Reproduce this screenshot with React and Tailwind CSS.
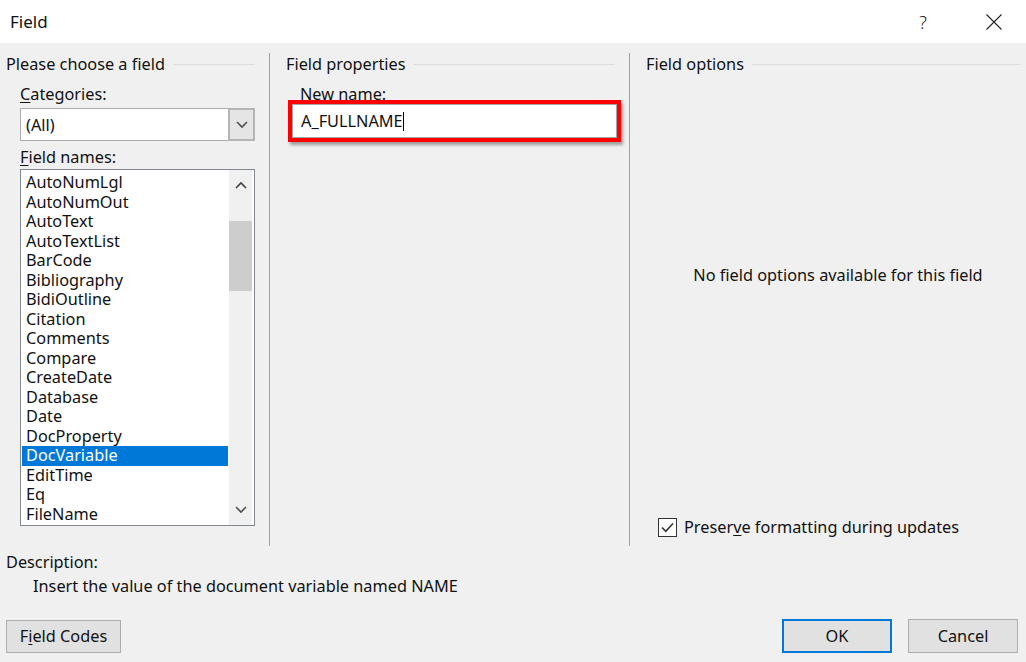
import React from "react";

const items = [
  "AutoNumLgl","AutoNumOut","AutoText","AutoTextList","BarCode","Bibliography","BidiOutline","Citation","Comments","Compare","CreateDate","Database","Date","DocProperty","DocVariable","EditTime","Eq","FileName",
];

function Heading({ children }) {
  return (
    <div className="flex items-center h-[22px] gap-[8px]">
      <span className="whitespace-nowrap">{children}</span>
      <div className="flex-1 h-px bg-[#dcdcdc]" />
    </div>
  );
}

function Chevron({ up }) {
  return (
    <svg width="12" height="8" viewBox="0 0 12 8">
      <path d={up ? "M1 7 L6 2 L11 7" : "M1 1 L6 6 L11 1"} fill="none" stroke={up ? "#404040" : "#505050"} strokeWidth="1.6" />
    </svg>
  );
}

export default function App() {
  return (
    <div className="w-[1026px] h-[662px] bg-[#f0f0f0] flex flex-col overflow-hidden text-[16.3px] text-[#111] font-['Segoe_UI','Noto_Sans',sans-serif] leading-[20px]">
      {/* Title bar */}
      <div className="h-[43px] bg-white flex items-center shrink-0">
        <span className="ml-[10px] text-[17px]">Field</span>
        <div className="flex-1" />
        <span className="text-[18px] mr-[59px] text-[#222] font-light">?</span>
        <svg width="16" height="16" viewBox="0 0 16 16" className="mr-[24px]">
          <path d="M0.5 0.5 L15.5 15.5 M15.5 0.5 L0.5 15.5" stroke="#222" strokeWidth="1.1" />
        </svg>
      </div>

      {/* Main */}
      <div className="flex h-[503px] pt-[10px] shrink-0">
        {/* Left column */}
        <div className="w-[269px] pl-[6px] pr-[14px] flex flex-col">
          <Heading>Please choose a field</Heading>
          <div className="mt-[9px] ml-[14px]"><span className="underline underline-offset-2">C</span>ategories:</div>
          <div className="mt-[4px] ml-[14px] h-[33px] bg-white border border-[#adadad] flex items-stretch">
            <div className="flex-1 flex items-center pl-[5px]">(All)</div>
            <div className="w-[27px] my-[-1px] mr-[-1px] bg-[#e5e5e5] border-2 border-[#b4b4b4] flex items-center justify-center">
              <Chevron />
            </div>
          </div>
          <div className="mt-[6px] ml-[14px]"><span className="underline underline-offset-2">F</span>ield names:</div>
          <div className="mt-[2px] ml-[14px] h-[357px] bg-white border border-[#828790] flex">
            <div className="flex-1 pt-[3px] pl-[1px]">
              {items.map((it) => (
                <div
                  key={it}
                  className={
                    "h-[19.5px] leading-[19.5px] pl-[4px] whitespace-nowrap " +
                    (it === "DocVariable" ? "bg-[#0078d7] text-white" : "")
                  }
                >
                  {it}
                </div>
              ))}
            </div>
            <div className="w-[23px] ml-[1px] mr-[2px] bg-[#f0f0f0] flex flex-col items-center">
              <div className="h-[30px] flex items-center justify-center"><Chevron up /></div>
              <div className="mt-[21px] w-full h-[70px] bg-[#cdcdcd]" />
              <div className="flex-1" />
              <div className="h-[30px] flex items-center justify-center"><Chevron /></div>
            </div>
          </div>
        </div>

        <div className="w-px bg-[#a0a0a0]" />

        {/* Middle column */}
        <div className="w-[359px] pl-[16px] pr-[14px] flex flex-col">
          <Heading>Field properties</Heading>
          <div className="mt-[9px] ml-[14px]">New name:</div>
          <div className="mt-[-4px] ml-[2px] mr-[-6px] h-[42px] border-4 border-[#ff0000] shadow-[2px_3px_3px_rgba(0,0,0,0.35)] bg-[#f0f0f0] flex">
            <div className="flex-1 bg-white border border-[#a5a5a5] flex items-center pl-[8px]">
              <span>A_FULLNAME</span>
              <span className="w-px h-[19px] bg-black" />
            </div>
          </div>
        </div>

        <div className="w-px bg-[#a0a0a0]" />

        {/* Right column */}
        <div className="flex-1 pl-[16px] pr-[6px] flex flex-col">
          <Heading>Field options</Heading>
          <div className="mt-[190px] text-center pl-[10px]">No field options available for this field</div>
          <div className="mt-[232px] ml-[12px] flex items-center gap-[7px]">
            <div className="w-[19px] h-[19px] border border-[#333] bg-white flex items-center justify-center">
              <svg width="15" height="15" viewBox="0 0 15 15">
                <path d="M2 7.5 L5.8 11.3 L13 3.5" fill="none" stroke="#333" strokeWidth="1.6" />
              </svg>
            </div>
            <span>Preser<span className="underline underline-offset-2">v</span>e formatting during updates</span>
          </div>
        </div>
      </div>

      {/* Bottom */}
      <div className="mt-[6px] ml-[6px]">Description:</div>
      <div className="mt-[4px] ml-[33px]">Insert the value of the document variable named NAME</div>
      <div className="mt-[23px] flex items-center">
        <button className="ml-[6px] w-[115px] h-[33px] bg-[#e1e1e1] border border-[#adadad]">
          F<span className="underline underline-offset-2">i</span>eld Codes
        </button>
        <div className="flex-1" />
        <button className="w-[110px] h-[34px] bg-[#e1e1e1] border-2 border-[#0078d7]">OK</button>
        <button className="ml-[16px] mr-[8px] w-[110px] h-[34px] bg-[#e1e1e1] border border-[#adadad]">Cancel</button>
      </div>
    </div>
  );
}
